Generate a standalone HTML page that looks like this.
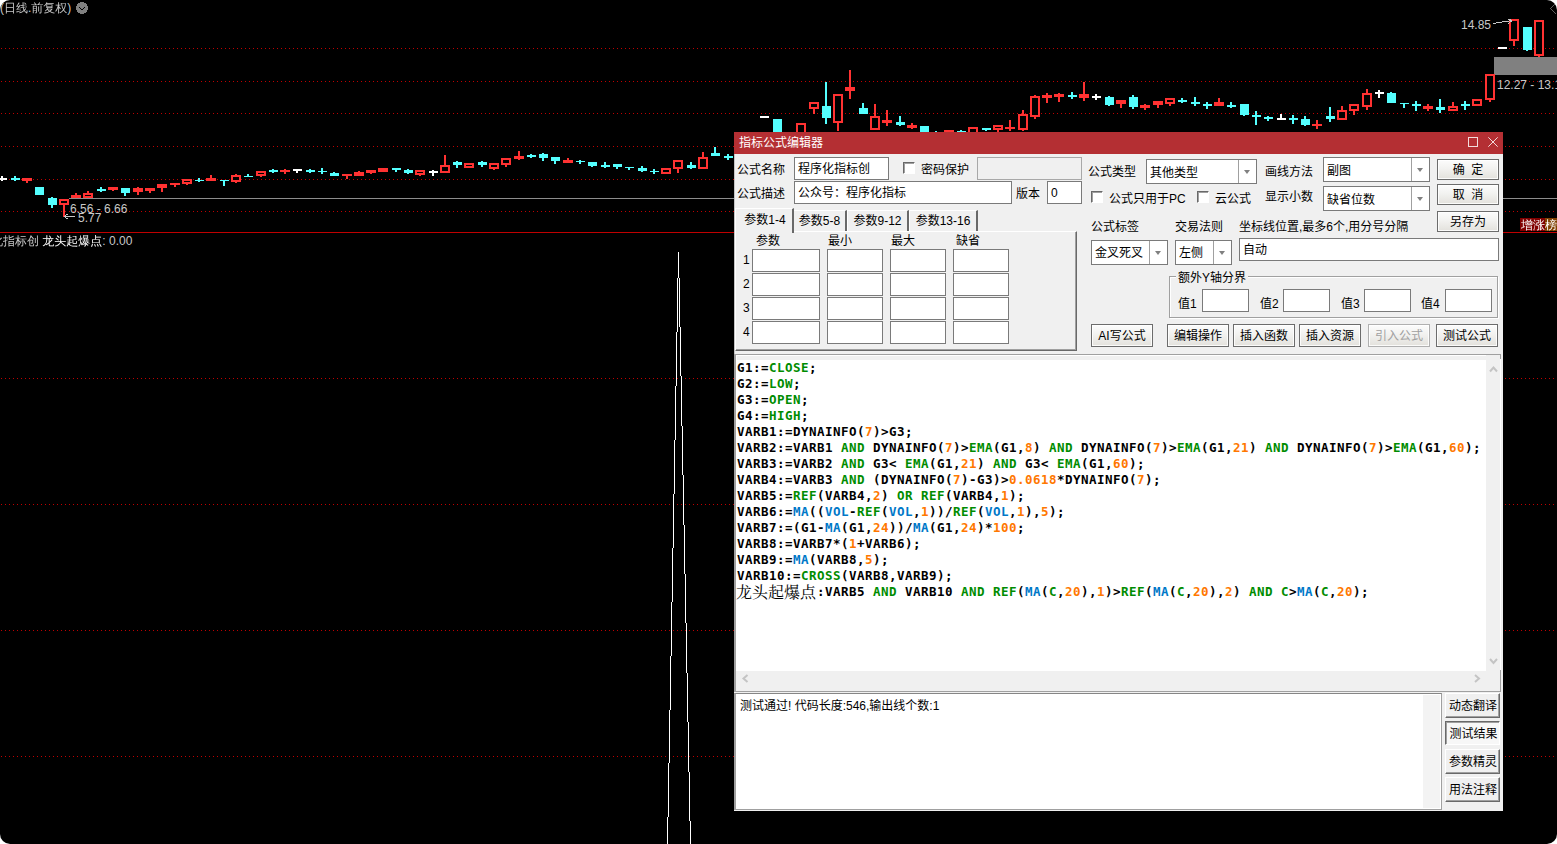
<!DOCTYPE html>
<html lang="zh-CN">
<head>
<meta charset="utf-8">
<title>指标公式编辑器</title>
<style>
html,body{margin:0;padding:0;background:#fff;}
body{width:1557px;height:844px;overflow:hidden;position:relative;}
#root{position:absolute;left:0;top:0;width:1557px;height:844px;background:#000;border-radius:10px;overflow:hidden;}
#chart{position:absolute;left:0;top:0;}
.ct{position:absolute;white-space:nowrap;font:12px/12px "Liberation Sans","Noto Sans CJK SC",sans-serif;color:#c8c8c8;}
.cj{position:absolute;white-space:nowrap;font:12px/12px "Liberation Sans","WenQuanYi Zen Hei","Noto Sans CJK SC",sans-serif;color:#c8c8c8;}
/* dialog */
#dlg{position:absolute;left:734px;top:132px;width:769px;height:679px;background:#f0f0f0;font:12px/14px "Liberation Sans","Noto Sans CJK SC",sans-serif;color:#000;}
#dlg *{box-sizing:border-box;}
#title{position:absolute;left:0;top:0;width:769px;height:22px;background:#b42f33;color:#fff;}
#title span{position:absolute;left:5px;top:4px;font-size:12px;line-height:15px;}
.l{position:absolute;white-space:nowrap;margin-top:1px;}
#tabs .l{margin-top:0;}
.inp{position:absolute;border:1px solid #7a7a7a;background:#fff;padding-left:3px;padding-top:1px;white-space:nowrap;overflow:hidden;}
.btn{position:absolute;border:1px solid #6c6c6c;background:linear-gradient(#fcfcfc,#f2f2f0 45%,#e3e1dc);box-shadow:inset 0 0 0 1px rgba(255,255,255,.85);text-align:center;white-space:nowrap;}
.b3{position:absolute;background:#f0f0f0;border:1px solid #fff;border-right-color:#696969;border-bottom-color:#696969;box-shadow:inset -1px -1px 0 #a0a0a0;text-align:center;white-space:nowrap;}
.b3p{position:absolute;background:#f7f7f7;border:1px solid #696969;border-right-color:#fff;border-bottom-color:#fff;box-shadow:inset 1px 1px 0 #a0a0a0;text-align:center;white-space:nowrap;}
.chk{position:absolute;width:12px;height:12px;border:1px solid #fff;border-top-color:#696969;border-left-color:#696969;background:#fff;box-shadow:inset 1px 1px 0 #a0a0a0;}
.cmb{position:absolute;border:1px solid #7a7a7a;background:#fff;padding-left:3px;white-space:nowrap;}
.cmb i{position:absolute;right:0;top:0;bottom:0;width:18px;border-left:1px solid #a0a0a0;background:#fff;}
.cmb i:after{content:"";position:absolute;left:5px;top:10px;border:3.5px solid transparent;border-top:4px solid #808080;border-bottom:0;}
.pb{position:absolute;border:1px solid #7a7a7a;background:#fff;height:23px;}
#code{position:absolute;left:3px;top:228px;font:bold 12.5px/16px "DejaVu Sans Mono","Noto Serif CJK SC",monospace;color:#000;white-space:pre;letter-spacing:0.474px;}
#code .g{color:#008c00}
#code .o{color:#ff7800}
#code .b{color:#0078c8}
#code .z{font:16px/16px "Liberation Serif","Noto Serif CJK SC",serif;font-weight:400;display:inline-block;width:81px;margin-left:-1px;position:relative;top:0.5px;vertical-align:top;letter-spacing:0;color:#000;}
</style>
</head>
<body>
<div id="root">
<svg id="chart" width="1557" height="844" viewBox="0 0 1557 844" shape-rendering="crispEdges">
<line x1="1" y1="48.5" x2="1557" y2="48.5" stroke="#c00000" stroke-width="1" stroke-dasharray="1 3"/>
<line x1="1" y1="81.5" x2="1557" y2="81.5" stroke="#c00000" stroke-width="1" stroke-dasharray="1 3"/>
<line x1="1" y1="113.5" x2="1557" y2="113.5" stroke="#c00000" stroke-width="1" stroke-dasharray="1 3"/>
<line x1="1" y1="146.5" x2="1557" y2="146.5" stroke="#c00000" stroke-width="1" stroke-dasharray="1 3"/>
<line x1="1" y1="179.5" x2="1557" y2="179.5" stroke="#c00000" stroke-width="1" stroke-dasharray="1 3"/>
<line x1="1" y1="211.5" x2="1557" y2="211.5" stroke="#c00000" stroke-width="1" stroke-dasharray="1 3"/>
<line x1="1" y1="378.5" x2="1557" y2="378.5" stroke="#c00000" stroke-width="1" stroke-dasharray="1 3"/>
<line x1="1" y1="504.5" x2="1557" y2="504.5" stroke="#c00000" stroke-width="1" stroke-dasharray="1 3"/>
<line x1="1" y1="630.5" x2="1557" y2="630.5" stroke="#c00000" stroke-width="1" stroke-dasharray="1 3"/>
<line x1="1" y1="756.5" x2="1557" y2="756.5" stroke="#c00000" stroke-width="1" stroke-dasharray="1 3"/>
<rect x="0" y="232" width="1557" height="1" fill="#c00000"/>
<rect x="69" y="198" width="1488" height="1" fill="#8c8c8c"/>
<rect x="1494" y="57" width="63" height="18" fill="#808080"/>
<rect x="1" y="176" width="2" height="2" fill="#ffffff"/>
<rect x="1" y="180" width="2" height="1" fill="#ffffff"/>
<rect x="-2" y="178" width="9" height="2" fill="#ffffff"/>
<rect x="14" y="176" width="2" height="2" fill="#54ffff"/>
<rect x="14" y="180" width="2" height="1" fill="#54ffff"/>
<rect x="11" y="178" width="9" height="2" fill="#54ffff"/>
<rect x="26" y="181" width="2" height="2" fill="#ff3232"/>
<rect x="22" y="178" width="10" height="3" fill="#ff3232"/>
<rect x="35" y="187" width="9" height="8" fill="#54ffff"/>
<rect x="51" y="197" width="2" height="1" fill="#54ffff"/>
<rect x="51" y="205" width="2" height="3" fill="#54ffff"/>
<rect x="48" y="198" width="9" height="7" fill="#54ffff"/>
<rect x="63" y="205" width="2" height="12" fill="#ff3232"/>
<rect x="60" y="200" width="8" height="4" fill="#000" stroke="#ff3232" stroke-width="2"/>
<rect x="75" y="193" width="2" height="2" fill="#ff3232"/>
<rect x="71" y="195" width="10" height="3" fill="#ff3232"/>
<rect x="87" y="191" width="2" height="2" fill="#ff3232"/>
<rect x="84" y="194" width="8" height="3" fill="#000" stroke="#ff3232" stroke-width="2"/>
<rect x="100" y="187" width="2" height="2" fill="#54ffff"/>
<rect x="100" y="191" width="2" height="1" fill="#54ffff"/>
<rect x="97" y="189" width="9" height="2" fill="#54ffff"/>
<rect x="112" y="190" width="2" height="1" fill="#ff3232"/>
<rect x="108" y="187" width="10" height="3" fill="#ff3232"/>
<rect x="124" y="193" width="2" height="3" fill="#54ffff"/>
<rect x="121" y="188" width="9" height="5" fill="#54ffff"/>
<rect x="137" y="187" width="2" height="1" fill="#ff3232"/>
<rect x="137" y="192" width="2" height="3" fill="#ff3232"/>
<rect x="134" y="189" width="8" height="2" fill="#000" stroke="#ff3232" stroke-width="2"/>
<rect x="149" y="191" width="2" height="2" fill="#ff3232"/>
<rect x="145" y="188" width="10" height="3" fill="#ff3232"/>
<rect x="161" y="188" width="2" height="4" fill="#ff3232"/>
<rect x="157" y="184" width="10" height="4" fill="#ff3232"/>
<rect x="174" y="185" width="2" height="2" fill="#ff3232"/>
<rect x="170" y="183" width="10" height="2" fill="#ff3232"/>
<rect x="186" y="184" width="2" height="1" fill="#ff3232"/>
<rect x="183" y="180" width="8" height="3" fill="#000" stroke="#ff3232" stroke-width="2"/>
<rect x="198" y="178" width="2" height="2" fill="#54ffff"/>
<rect x="198" y="181" width="2" height="1" fill="#54ffff"/>
<rect x="195" y="180" width="9" height="1" fill="#54ffff"/>
<rect x="210" y="175" width="2" height="3" fill="#ff3232"/>
<rect x="206" y="178" width="10" height="3" fill="#ff3232"/>
<rect x="223" y="181" width="2" height="5" fill="#54ffff"/>
<rect x="220" y="180" width="9" height="1" fill="#54ffff"/>
<rect x="235" y="174" width="2" height="1" fill="#ff3232"/>
<rect x="235" y="182" width="2" height="1" fill="#ff3232"/>
<rect x="232" y="176" width="8" height="5" fill="#000" stroke="#ff3232" stroke-width="2"/>
<rect x="247" y="174" width="2" height="2" fill="#54ffff"/>
<rect x="244" y="176" width="9" height="1" fill="#54ffff"/>
<rect x="260" y="176" width="2" height="1" fill="#ff3232"/>
<rect x="257" y="172" width="8" height="3" fill="#000" stroke="#ff3232" stroke-width="2"/>
<rect x="272" y="169" width="2" height="1" fill="#54ffff"/>
<rect x="272" y="172" width="2" height="1" fill="#54ffff"/>
<rect x="269" y="170" width="9" height="2" fill="#54ffff"/>
<rect x="284" y="169" width="2" height="1" fill="#ff3232"/>
<rect x="284" y="172" width="2" height="2" fill="#ff3232"/>
<rect x="280" y="170" width="10" height="2" fill="#ff3232"/>
<rect x="296" y="171" width="2" height="2" fill="#ffffff"/>
<rect x="293" y="169" width="9" height="2" fill="#ffffff"/>
<rect x="309" y="169" width="2" height="1" fill="#54ffff"/>
<rect x="309" y="172" width="2" height="1" fill="#54ffff"/>
<rect x="306" y="170" width="9" height="2" fill="#54ffff"/>
<rect x="321" y="168" width="2" height="3" fill="#54ffff"/>
<rect x="321" y="172" width="2" height="2" fill="#54ffff"/>
<rect x="318" y="171" width="9" height="1" fill="#54ffff"/>
<rect x="333" y="172" width="2" height="1" fill="#54ffff"/>
<rect x="330" y="173" width="9" height="3" fill="#54ffff"/>
<rect x="346" y="176" width="2" height="3" fill="#ff3232"/>
<rect x="342" y="174" width="10" height="2" fill="#ff3232"/>
<rect x="358" y="171" width="2" height="1" fill="#ff3232"/>
<rect x="354" y="172" width="10" height="4" fill="#ff3232"/>
<rect x="370" y="173" width="2" height="1" fill="#ff3232"/>
<rect x="366" y="170" width="10" height="3" fill="#ff3232"/>
<rect x="378" y="168" width="10" height="4" fill="#ff3232"/>
<rect x="395" y="170" width="2" height="2" fill="#54ffff"/>
<rect x="392" y="168" width="9" height="2" fill="#54ffff"/>
<rect x="407" y="169" width="2" height="1" fill="#54ffff"/>
<rect x="407" y="173" width="2" height="1" fill="#54ffff"/>
<rect x="404" y="170" width="9" height="3" fill="#54ffff"/>
<rect x="419" y="175" width="2" height="1" fill="#ff3232"/>
<rect x="416" y="171" width="8" height="3" fill="#000" stroke="#ff3232" stroke-width="2"/>
<rect x="432" y="170" width="2" height="1" fill="#ffffff"/>
<rect x="432" y="173" width="2" height="3" fill="#ffffff"/>
<rect x="429" y="171" width="9" height="2" fill="#ffffff"/>
<rect x="444" y="155" width="2" height="10" fill="#ff3232"/>
<rect x="441" y="166" width="8" height="6" fill="#000" stroke="#ff3232" stroke-width="2"/>
<rect x="456" y="161" width="2" height="1" fill="#54ffff"/>
<rect x="456" y="165" width="2" height="3" fill="#54ffff"/>
<rect x="453" y="162" width="9" height="3" fill="#54ffff"/>
<rect x="465" y="164" width="8" height="3" fill="#000" stroke="#ff3232" stroke-width="2"/>
<rect x="481" y="161" width="2" height="1" fill="#54ffff"/>
<rect x="481" y="165" width="2" height="2" fill="#54ffff"/>
<rect x="478" y="162" width="9" height="3" fill="#54ffff"/>
<rect x="493" y="169" width="2" height="1" fill="#ff3232"/>
<rect x="490" y="164" width="8" height="4" fill="#000" stroke="#ff3232" stroke-width="2"/>
<rect x="505" y="165" width="2" height="2" fill="#ff3232"/>
<rect x="502" y="159" width="8" height="5" fill="#000" stroke="#ff3232" stroke-width="2"/>
<rect x="518" y="151" width="2" height="5" fill="#ff3232"/>
<rect x="518" y="159" width="2" height="1" fill="#ff3232"/>
<rect x="514" y="156" width="10" height="3" fill="#ff3232"/>
<rect x="530" y="154" width="2" height="1" fill="#54ffff"/>
<rect x="530" y="157" width="2" height="1" fill="#54ffff"/>
<rect x="527" y="155" width="9" height="2" fill="#54ffff"/>
<rect x="542" y="153" width="2" height="1" fill="#54ffff"/>
<rect x="542" y="158" width="2" height="3" fill="#54ffff"/>
<rect x="539" y="154" width="9" height="4" fill="#54ffff"/>
<rect x="554" y="161" width="2" height="3" fill="#54ffff"/>
<rect x="551" y="157" width="9" height="4" fill="#54ffff"/>
<rect x="567" y="158" width="2" height="2" fill="#ff3232"/>
<rect x="563" y="160" width="10" height="3" fill="#ff3232"/>
<rect x="579" y="160" width="2" height="1" fill="#54ffff"/>
<rect x="579" y="162" width="2" height="2" fill="#54ffff"/>
<rect x="576" y="161" width="9" height="1" fill="#54ffff"/>
<rect x="591" y="166" width="2" height="1" fill="#54ffff"/>
<rect x="588" y="162" width="9" height="4" fill="#54ffff"/>
<rect x="604" y="162" width="2" height="3" fill="#54ffff"/>
<rect x="604" y="167" width="2" height="1" fill="#54ffff"/>
<rect x="601" y="165" width="9" height="2" fill="#54ffff"/>
<rect x="616" y="167" width="2" height="2" fill="#54ffff"/>
<rect x="613" y="164" width="9" height="3" fill="#54ffff"/>
<rect x="628" y="168" width="2" height="2" fill="#54ffff"/>
<rect x="625" y="167" width="9" height="1" fill="#54ffff"/>
<rect x="641" y="166" width="2" height="2" fill="#54ffff"/>
<rect x="641" y="171" width="2" height="1" fill="#54ffff"/>
<rect x="638" y="168" width="9" height="3" fill="#54ffff"/>
<rect x="653" y="169" width="2" height="2" fill="#54ffff"/>
<rect x="653" y="172" width="2" height="2" fill="#54ffff"/>
<rect x="650" y="171" width="9" height="1" fill="#54ffff"/>
<rect x="662" y="169" width="8" height="4" fill="#000" stroke="#ff3232" stroke-width="2"/>
<rect x="677" y="169" width="2" height="4" fill="#ff3232"/>
<rect x="674" y="161" width="8" height="7" fill="#000" stroke="#ff3232" stroke-width="2"/>
<rect x="690" y="162" width="2" height="3" fill="#54ffff"/>
<rect x="690" y="168" width="2" height="1" fill="#54ffff"/>
<rect x="687" y="165" width="9" height="3" fill="#54ffff"/>
<rect x="702" y="152" width="2" height="5" fill="#ff3232"/>
<rect x="699" y="158" width="8" height="10" fill="#000" stroke="#ff3232" stroke-width="2"/>
<rect x="714" y="147" width="2" height="6" fill="#54ffff"/>
<rect x="711" y="153" width="9" height="3" fill="#54ffff"/>
<rect x="727" y="154" width="2" height="2" fill="#54ffff"/>
<rect x="727" y="158" width="2" height="2" fill="#54ffff"/>
<rect x="724" y="156" width="9" height="2" fill="#54ffff"/>
<rect x="760" y="116" width="9" height="2" fill="#ffffff"/>
<rect x="773" y="119" width="9" height="21" fill="#54ffff"/>
<rect x="797" y="124" width="8" height="15" fill="#000" stroke="#ff3232" stroke-width="2"/>
<rect x="813" y="109" width="2" height="5" fill="#ff3232"/>
<rect x="810" y="103" width="8" height="5" fill="#000" stroke="#ff3232" stroke-width="2"/>
<rect x="825" y="82" width="2" height="24" fill="#54ffff"/>
<rect x="825" y="118" width="2" height="6" fill="#54ffff"/>
<rect x="822" y="106" width="9" height="12" fill="#54ffff"/>
<rect x="837" y="123" width="2" height="8" fill="#ff3232"/>
<rect x="834" y="95" width="8" height="27" fill="#000" stroke="#ff3232" stroke-width="2"/>
<rect x="849" y="70" width="2" height="17" fill="#ff3232"/>
<rect x="849" y="91" width="2" height="8" fill="#ff3232"/>
<rect x="845" y="87" width="10" height="4" fill="#ff3232"/>
<rect x="862" y="103" width="2" height="5" fill="#54ffff"/>
<rect x="859" y="108" width="9" height="6" fill="#54ffff"/>
<rect x="874" y="104" width="2" height="12" fill="#ff3232"/>
<rect x="871" y="117" width="8" height="12" fill="#000" stroke="#ff3232" stroke-width="2"/>
<rect x="886" y="110" width="2" height="10" fill="#ff3232"/>
<rect x="886" y="123" width="2" height="3" fill="#ff3232"/>
<rect x="882" y="120" width="10" height="3" fill="#ff3232"/>
<rect x="899" y="116" width="2" height="6" fill="#54ffff"/>
<rect x="899" y="125" width="2" height="1" fill="#54ffff"/>
<rect x="896" y="122" width="9" height="3" fill="#54ffff"/>
<rect x="911" y="123" width="2" height="2" fill="#ff3232"/>
<rect x="911" y="128" width="2" height="1" fill="#ff3232"/>
<rect x="907" y="125" width="10" height="3" fill="#ff3232"/>
<rect x="920" y="126" width="9" height="14" fill="#54ffff"/>
<rect x="935" y="131" width="2" height="2" fill="#54ffff"/>
<rect x="935" y="134" width="2" height="6" fill="#54ffff"/>
<rect x="932" y="133" width="9" height="1" fill="#54ffff"/>
<rect x="944" y="130" width="10" height="10" fill="#ff3232"/>
<rect x="960" y="130" width="2" height="1" fill="#54ffff"/>
<rect x="957" y="131" width="9" height="5" fill="#54ffff"/>
<rect x="969" y="128" width="8" height="11" fill="#000" stroke="#ff3232" stroke-width="2"/>
<rect x="985" y="130" width="2" height="1" fill="#54ffff"/>
<rect x="982" y="128" width="9" height="2" fill="#54ffff"/>
<rect x="997" y="130" width="2" height="2" fill="#ff3232"/>
<rect x="994" y="126" width="8" height="3" fill="#000" stroke="#ff3232" stroke-width="2"/>
<rect x="1009" y="120" width="2" height="7" fill="#ff3232"/>
<rect x="1009" y="129" width="2" height="2" fill="#ff3232"/>
<rect x="1005" y="127" width="10" height="2" fill="#ff3232"/>
<rect x="1022" y="110" width="2" height="4" fill="#ff3232"/>
<rect x="1022" y="130" width="2" height="1" fill="#ff3232"/>
<rect x="1019" y="115" width="8" height="14" fill="#000" stroke="#ff3232" stroke-width="2"/>
<rect x="1034" y="95" width="2" height="1" fill="#ff3232"/>
<rect x="1034" y="117" width="2" height="2" fill="#ff3232"/>
<rect x="1031" y="97" width="8" height="19" fill="#000" stroke="#ff3232" stroke-width="2"/>
<rect x="1046" y="93" width="2" height="2" fill="#ff3232"/>
<rect x="1046" y="98" width="2" height="5" fill="#ff3232"/>
<rect x="1042" y="95" width="10" height="3" fill="#ff3232"/>
<rect x="1058" y="93" width="2" height="1" fill="#ff3232"/>
<rect x="1058" y="97" width="2" height="5" fill="#ff3232"/>
<rect x="1054" y="94" width="10" height="3" fill="#ff3232"/>
<rect x="1071" y="92" width="2" height="3" fill="#54ffff"/>
<rect x="1071" y="97" width="2" height="2" fill="#54ffff"/>
<rect x="1068" y="95" width="9" height="2" fill="#54ffff"/>
<rect x="1083" y="82" width="2" height="12" fill="#ff3232"/>
<rect x="1083" y="98" width="2" height="3" fill="#ff3232"/>
<rect x="1079" y="94" width="10" height="4" fill="#ff3232"/>
<rect x="1095" y="94" width="2" height="2" fill="#ffffff"/>
<rect x="1095" y="98" width="2" height="2" fill="#ffffff"/>
<rect x="1092" y="96" width="9" height="2" fill="#ffffff"/>
<rect x="1108" y="96" width="2" height="1" fill="#54ffff"/>
<rect x="1108" y="105" width="2" height="1" fill="#54ffff"/>
<rect x="1105" y="97" width="9" height="8" fill="#54ffff"/>
<rect x="1120" y="104" width="2" height="4" fill="#ff3232"/>
<rect x="1116" y="100" width="10" height="4" fill="#ff3232"/>
<rect x="1132" y="95" width="2" height="2" fill="#54ffff"/>
<rect x="1132" y="107" width="2" height="2" fill="#54ffff"/>
<rect x="1129" y="97" width="9" height="10" fill="#54ffff"/>
<rect x="1144" y="104" width="2" height="1" fill="#ff3232"/>
<rect x="1144" y="108" width="2" height="2" fill="#ff3232"/>
<rect x="1140" y="105" width="10" height="3" fill="#ff3232"/>
<rect x="1157" y="105" width="2" height="3" fill="#ff3232"/>
<rect x="1153" y="101" width="10" height="4" fill="#ff3232"/>
<rect x="1169" y="104" width="2" height="2" fill="#ff3232"/>
<rect x="1166" y="99" width="8" height="4" fill="#000" stroke="#ff3232" stroke-width="2"/>
<rect x="1181" y="98" width="2" height="2" fill="#54ffff"/>
<rect x="1181" y="102" width="2" height="1" fill="#54ffff"/>
<rect x="1178" y="100" width="9" height="2" fill="#54ffff"/>
<rect x="1194" y="97" width="2" height="5" fill="#54ffff"/>
<rect x="1194" y="104" width="2" height="2" fill="#54ffff"/>
<rect x="1191" y="102" width="9" height="2" fill="#54ffff"/>
<rect x="1206" y="102" width="2" height="2" fill="#54ffff"/>
<rect x="1206" y="106" width="2" height="3" fill="#54ffff"/>
<rect x="1203" y="104" width="9" height="2" fill="#54ffff"/>
<rect x="1218" y="98" width="2" height="4" fill="#ff3232"/>
<rect x="1214" y="102" width="10" height="4" fill="#ff3232"/>
<rect x="1230" y="102" width="2" height="3" fill="#54ffff"/>
<rect x="1230" y="107" width="2" height="1" fill="#54ffff"/>
<rect x="1227" y="105" width="9" height="2" fill="#54ffff"/>
<rect x="1243" y="115" width="2" height="1" fill="#54ffff"/>
<rect x="1240" y="104" width="9" height="11" fill="#54ffff"/>
<rect x="1255" y="111" width="2" height="4" fill="#54ffff"/>
<rect x="1255" y="117" width="2" height="8" fill="#54ffff"/>
<rect x="1252" y="115" width="9" height="2" fill="#54ffff"/>
<rect x="1267" y="116" width="2" height="1" fill="#54ffff"/>
<rect x="1267" y="119" width="2" height="2" fill="#54ffff"/>
<rect x="1264" y="117" width="9" height="2" fill="#54ffff"/>
<rect x="1280" y="114" width="2" height="4" fill="#ffffff"/>
<rect x="1277" y="118" width="9" height="2" fill="#ffffff"/>
<rect x="1292" y="115" width="2" height="3" fill="#54ffff"/>
<rect x="1292" y="120" width="2" height="4" fill="#54ffff"/>
<rect x="1289" y="118" width="9" height="2" fill="#54ffff"/>
<rect x="1304" y="116" width="2" height="3" fill="#54ffff"/>
<rect x="1304" y="125" width="2" height="1" fill="#54ffff"/>
<rect x="1301" y="119" width="9" height="6" fill="#54ffff"/>
<rect x="1316" y="120" width="2" height="4" fill="#ff3232"/>
<rect x="1316" y="126" width="2" height="3" fill="#ff3232"/>
<rect x="1312" y="124" width="10" height="2" fill="#ff3232"/>
<rect x="1329" y="107" width="2" height="9" fill="#54ffff"/>
<rect x="1329" y="119" width="2" height="3" fill="#54ffff"/>
<rect x="1326" y="116" width="9" height="3" fill="#54ffff"/>
<rect x="1341" y="106" width="2" height="4" fill="#ff3232"/>
<rect x="1338" y="111" width="8" height="8" fill="#000" stroke="#ff3232" stroke-width="2"/>
<rect x="1353" y="111" width="2" height="4" fill="#ff3232"/>
<rect x="1350" y="105" width="8" height="5" fill="#000" stroke="#ff3232" stroke-width="2"/>
<rect x="1366" y="89" width="2" height="4" fill="#ff3232"/>
<rect x="1366" y="107" width="2" height="3" fill="#ff3232"/>
<rect x="1363" y="94" width="8" height="12" fill="#000" stroke="#ff3232" stroke-width="2"/>
<rect x="1378" y="90" width="2" height="2" fill="#ffffff"/>
<rect x="1378" y="94" width="2" height="4" fill="#ffffff"/>
<rect x="1375" y="92" width="9" height="2" fill="#ffffff"/>
<rect x="1390" y="92" width="2" height="1" fill="#54ffff"/>
<rect x="1387" y="93" width="9" height="10" fill="#54ffff"/>
<rect x="1403" y="104" width="2" height="4" fill="#54ffff"/>
<rect x="1400" y="103" width="9" height="1" fill="#54ffff"/>
<rect x="1415" y="101" width="2" height="3" fill="#54ffff"/>
<rect x="1415" y="106" width="2" height="5" fill="#54ffff"/>
<rect x="1412" y="104" width="9" height="2" fill="#54ffff"/>
<rect x="1427" y="104" width="2" height="2" fill="#ff3232"/>
<rect x="1427" y="109" width="2" height="2" fill="#ff3232"/>
<rect x="1423" y="106" width="10" height="3" fill="#ff3232"/>
<rect x="1439" y="99" width="2" height="8" fill="#54ffff"/>
<rect x="1439" y="110" width="2" height="3" fill="#54ffff"/>
<rect x="1436" y="107" width="9" height="3" fill="#54ffff"/>
<rect x="1452" y="102" width="2" height="4" fill="#ff3232"/>
<rect x="1449" y="107" width="8" height="3" fill="#000" stroke="#ff3232" stroke-width="2"/>
<rect x="1464" y="101" width="2" height="3" fill="#54ffff"/>
<rect x="1464" y="106" width="2" height="4" fill="#54ffff"/>
<rect x="1461" y="104" width="9" height="2" fill="#54ffff"/>
<rect x="1473" y="100" width="8" height="5" fill="#000" stroke="#ff3232" stroke-width="2"/>
<rect x="1489" y="100" width="2" height="2" fill="#ff3232"/>
<rect x="1486" y="75" width="8" height="24" fill="#000" stroke="#ff3232" stroke-width="2"/>
<rect x="1498" y="47" width="9" height="2" fill="#ffffff"/>
<rect x="1513" y="41" width="2" height="5" fill="#ff3232"/>
<rect x="1510" y="20" width="8" height="20" fill="#000" stroke="#ff3232" stroke-width="2"/>
<rect x="1526" y="50" width="2" height="1" fill="#54ffff"/>
<rect x="1523" y="27" width="9" height="23" fill="#54ffff"/>
<rect x="1538" y="56" width="2" height="1" fill="#ff3232"/>
<rect x="1535" y="21" width="8" height="34" fill="#000" stroke="#ff3232" stroke-width="2"/>
<polyline points="667.5,845 678.5,252 690.5,845" fill="none" stroke="#ffffff" stroke-width="1"/>
<path d="M64.5 216.5 H75 M64.5 216.5 l3 -2.5 M64.5 216.5 l3 2.5" stroke="#c8c8c8" stroke-width="1" fill="none"/>
<path d="M1493 23.5 L1512 20.5 M1512 20.5 l-4 -1.5 M1512 20.5 l-3.5 3" stroke="#c8c8c8" stroke-width="1" fill="none"/>
<circle cx="82" cy="8" r="6" fill="#808080"/><path d="M78.6 6.5 L82 9.7 L85.4 6.5" stroke="#000" stroke-width="1" fill="none"/>
<path d="M1550.5 8.5 L1556.5 2.5 M1550.5 8.5 L1556.5 14.5" stroke="#606060" stroke-width="1" fill="none"/>
</svg>
<div class="cj" style="left:0px;top:2px;">(日线.前复权)</div>
<div class="ct" style="left:70px;top:203px;">6.56 - 6.66</div>
<div class="ct" style="left:78px;top:212px;">5.77</div>
<div class="ct" style="left:1461px;top:19px;">14.85</div>
<div class="ct" style="left:1497px;top:79px;">12.27 - 13.10</div>
<div class="cj" style="left:-33px;top:235px;">程序化指标创 <span style="color:#fff">龙头起爆点</span>: 0.00</div>
<div class="cj" style="left:1520px;top:218px;height:13px;line-height:14px;color:#fff;background:#800000;width:37px;overflow:hidden;"><span style="display:inline-block;height:13px;padding-left:1px;">增涨</span><span style="display:inline-block;height:13px;width:14px;background:#804000;">榜</span></div>

<div id="dlg">
 <div id="title"><span>指标公式编辑器</span>
  <svg style="position:absolute;left:734px;top:5px" width="30" height="11" viewBox="0 0 30 11"><rect x="0.5" y="0.5" width="9" height="9" fill="none" stroke="#f3dcdc" stroke-width="1"/><path d="M20.3 0.3 L29.7 9.7 M29.7 0.3 L20.3 9.7" stroke="#f3dcdc" stroke-width="1" fill="none"/></svg>
 </div>

 <!-- row 1 -->
 <div class="l" style="left:3px;top:30px;">公式名称</div>
 <div class="inp" style="left:60px;top:25px;width:95px;height:23px;line-height:21px;">程序化指标创</div>
 <div class="chk" style="left:169px;top:30px;"></div>
 <div class="l" style="left:187px;top:30px;">密码保护</div>
 <div class="inp" style="left:243px;top:25px;width:105px;height:23px;background:#f0f0f0;border-color:#a8a8a8;"></div>
 <div class="l" style="left:354px;top:32px;">公式类型</div>
 <div class="cmb" style="left:412px;top:27px;width:111px;height:25px;line-height:26px;">其他类型<i></i></div>
 <div class="l" style="left:531px;top:32px;">画线方法</div>
 <div class="cmb" style="left:589px;top:25px;width:107px;height:25px;line-height:26px;">副图<i></i></div>
 <div class="btn" style="left:703px;top:27px;width:62px;height:21px;line-height:21px;">确&nbsp;&nbsp;定</div>

 <!-- row 2 -->
 <div class="l" style="left:3px;top:54px;">公式描述</div>
 <div class="inp" style="left:60px;top:49px;width:218px;height:23px;line-height:21px;">公众号：程序化指标</div>
 <div class="l" style="left:282px;top:54px;">版本</div>
 <div class="inp" style="left:313px;top:49px;width:35px;height:23px;line-height:21px;">0</div>
 <div class="chk" style="left:357px;top:59px;"></div>
 <div class="l" style="left:375px;top:59px;">公式只用于PC</div>
 <div class="chk" style="left:463px;top:59px;"></div>
 <div class="l" style="left:481px;top:59px;">云公式</div>
 <div class="l" style="left:531px;top:57px;">显示小数</div>
 <div class="cmb" style="left:589px;top:54px;width:107px;height:25px;line-height:26px;">缺省位数<i></i></div>
 <div class="btn" style="left:703px;top:52px;width:62px;height:21px;line-height:21px;">取&nbsp;&nbsp;消</div>
 <div class="btn" style="left:703px;top:79px;width:62px;height:21px;line-height:21px;">另存为</div>

 <!-- tabs -->
 <div id="tabs">
  <div class="l" style="left:1px;top:76px;width:59px;height:25px;border:1px solid #fff;border-right:2px solid #696969;border-bottom:0;text-align:center;line-height:22px;padding-left:2px;background:#f0f0f0;z-index:2;">参数1-4</div>
  <div class="l" style="left:60px;top:78px;width:53px;height:21px;border-top:1px solid #fff;border-right:2px solid #696969;text-align:center;line-height:21px;">参数5-8</div>
  <div class="l" style="left:113px;top:78px;width:62px;height:21px;border-top:1px solid #fff;border-left:1px solid #fff;border-right:2px solid #696969;text-align:center;line-height:21px;">参数9-12</div>
  <div class="l" style="left:175px;top:78px;width:69px;height:21px;border-top:1px solid #fff;border-left:1px solid #fff;border-right:2px solid #696969;text-align:center;line-height:21px;">参数13-16</div>
 </div>
 <div style="position:absolute;left:1px;top:99px;width:342px;height:120px;border:1px solid #fff;border-right:1px solid #696969;border-bottom:1px solid #696969;box-shadow:inset -1px -1px 0 #a0a0a0;"></div>
 <div style="position:absolute;left:0;top:22px;width:1px;height:200px;background:#c4c4c4;"></div>
 <div class="l" style="left:22px;top:101px;">参数</div>
 <div class="l" style="left:94px;top:101px;">最小</div>
 <div class="l" style="left:157px;top:101px;">最大</div>
 <div class="l" style="left:222px;top:101px;">缺省</div>
 <div class="l" style="left:9px;top:120px;">1</div>
 <div class="l" style="left:9px;top:144px;">2</div>
 <div class="l" style="left:9px;top:168px;">3</div>
 <div class="l" style="left:9px;top:192px;">4</div>
 <div class="pb" style="left:18px;top:117px;width:68px;"></div><div class="pb" style="left:93px;top:117px;width:56px;"></div><div class="pb" style="left:156px;top:117px;width:56px;"></div><div class="pb" style="left:219px;top:117px;width:56px;"></div>
 <div class="pb" style="left:18px;top:141px;width:68px;"></div><div class="pb" style="left:93px;top:141px;width:56px;"></div><div class="pb" style="left:156px;top:141px;width:56px;"></div><div class="pb" style="left:219px;top:141px;width:56px;"></div>
 <div class="pb" style="left:18px;top:165px;width:68px;"></div><div class="pb" style="left:93px;top:165px;width:56px;"></div><div class="pb" style="left:156px;top:165px;width:56px;"></div><div class="pb" style="left:219px;top:165px;width:56px;"></div>
 <div class="pb" style="left:18px;top:189px;width:68px;"></div><div class="pb" style="left:93px;top:189px;width:56px;"></div><div class="pb" style="left:156px;top:189px;width:56px;"></div><div class="pb" style="left:219px;top:189px;width:56px;"></div>

 <!-- right middle -->
 <div class="l" style="left:357px;top:87px;">公式标签</div>
 <div class="l" style="left:441px;top:87px;">交易法则</div>
 <div class="l" style="left:505px;top:87px;">坐标线位置,最多6个,用分号分隔</div>
 <div class="cmb" style="left:357px;top:108px;width:77px;height:25px;line-height:25px;">金叉死叉<i></i></div>
 <div class="cmb" style="left:441px;top:108px;width:57px;height:25px;line-height:25px;">左侧<i></i></div>
 <div class="inp" style="left:505px;top:106px;width:260px;height:23px;line-height:20px;">自动</div>
 <div style="position:absolute;left:435px;top:144px;width:329px;height:42px;border:1px solid #a0a0a0;box-shadow:inset 1px 1px 0 #fff, 1px 1px 0 #fff;"></div>
 <div class="l" style="left:442px;top:138px;background:#f0f0f0;padding:0 2px;">额外Y轴分界</div>
 <div class="l" style="left:444px;top:164px;">值1</div><div class="pb" style="left:468px;top:157px;width:47px;"></div>
 <div class="l" style="left:526px;top:164px;">值2</div><div class="pb" style="left:549px;top:157px;width:47px;"></div>
 <div class="l" style="left:607px;top:164px;">值3</div><div class="pb" style="left:630px;top:157px;width:47px;"></div>
 <div class="l" style="left:687px;top:164px;">值4</div><div class="pb" style="left:711px;top:157px;width:47px;"></div>
 <div class="btn" style="left:357px;top:192px;width:62px;height:23px;line-height:22.5px;">AI写公式</div>
 <div class="btn" style="left:433px;top:192px;width:62px;height:23px;line-height:22.5px;">编辑操作</div>
 <div class="btn" style="left:499px;top:192px;width:62px;height:23px;line-height:22.5px;">插入函数</div>
 <div class="btn" style="left:565px;top:192px;width:62px;height:23px;line-height:22.5px;">插入资源</div>
 <div class="btn" style="left:634px;top:192px;width:62px;height:23px;line-height:22.5px;color:#a0a0a0;border-color:#b0b0b0;">引入公式</div>
 <div class="btn" style="left:702px;top:192px;width:62px;height:23px;line-height:22.5px;">测试公式</div>

 <!-- editor -->
 <div style="position:absolute;left:0;top:222px;width:767px;height:338px;background:#fff;border-left:2px solid #a0a0a0;border-top:1px solid #a0a0a0;border-bottom:1px solid #a0a0a0;"></div>
 <div style="position:absolute;left:766px;top:538px;width:1px;height:22px;background:#a0a0a0;"></div>
 <div style="position:absolute;left:766px;top:222px;width:1px;height:5px;background:#a0a0a0;"></div>
 <div style="position:absolute;left:3px;top:224px;width:749px;height:4px;background:#f0f0f0;"></div>
 <div style="position:absolute;left:752px;top:223px;width:14px;height:316px;background:#f0f0f0;"></div>
 <div style="position:absolute;left:2px;top:539px;width:764px;height:20px;background:#f0f0f0;"></div>
 <svg style="position:absolute;left:0;top:222px;" width="769" height="340" viewBox="0 0 769 340">
  <path d="M756 17.5 L759.5 13.5 L763 17.5" fill="none" stroke="#c4c4c4" stroke-width="2"/>
  <path d="M756 305 L759.5 309 L763 305" fill="none" stroke="#c4c4c4" stroke-width="2"/>
  <path d="M13.5 321 L9.5 324.5 L13.5 328" fill="none" stroke="#c4c4c4" stroke-width="2"/>
  <path d="M741 321 L745 324.5 L741 328" fill="none" stroke="#c4c4c4" stroke-width="2"/>
 </svg>
<div id="code">G1:=<span class="g">CLOSE</span>;
G2:=<span class="g">LOW</span>;
G3:=<span class="g">OPEN</span>;
G4:=<span class="g">HIGH</span>;
VARB1:=DYNAINFO(<span class="o">7</span>)&gt;G3;
VARB2:=VARB1 <span class="g">AND</span> DYNAINFO(<span class="o">7</span>)&gt;<span class="g">EMA</span>(G1,<span class="o">8</span>) <span class="g">AND</span> DYNAINFO(<span class="o">7</span>)&gt;<span class="g">EMA</span>(G1,<span class="o">21</span>) <span class="g">AND</span> DYNAINFO(<span class="o">7</span>)&gt;<span class="g">EMA</span>(G1,<span class="o">60</span>);
VARB3:=VARB2 <span class="g">AND</span> G3&lt; <span class="g">EMA</span>(G1,<span class="o">21</span>) <span class="g">AND</span> G3&lt; <span class="g">EMA</span>(G1,<span class="o">60</span>);
VARB4:=VARB3 <span class="g">AND</span> (DYNAINFO(<span class="o">7</span>)-G3)&gt;<span class="o">0.0618</span>*DYNAINFO(<span class="o">7</span>);
VARB5:=<span class="g">REF</span>(VARB4,<span class="o">2</span>) <span class="g">OR</span> <span class="g">REF</span>(VARB4,<span class="o">1</span>);
VARB6:=<span class="b">MA</span>((<span class="b">VOL</span>-<span class="g">REF</span>(<span class="b">VOL</span>,<span class="o">1</span>))/<span class="g">REF</span>(<span class="b">VOL</span>,<span class="o">1</span>),<span class="o">5</span>);
VARB7:=(G1-<span class="b">MA</span>(G1,<span class="o">24</span>))/<span class="b">MA</span>(G1,<span class="o">24</span>)*<span class="o">100</span>;
VARB8:=VARB7*(<span class="o">1</span>+VARB6);
VARB9:=<span class="b">MA</span>(VARB8,<span class="o">5</span>);
VARB10:=<span class="g">CROSS</span>(VARB8,VARB9);
<span class="z">龙头起爆点</span>:VARB5 <span class="g">AND</span> VARB10 <span class="g">AND</span> <span class="g">REF</span>(<span class="b">MA</span>(<span class="g">C</span>,<span class="o">20</span>),<span class="o">1</span>)&gt;<span class="g">REF</span>(<span class="b">MA</span>(<span class="g">C</span>,<span class="o">20</span>),<span class="o">2</span>) <span class="g">AND</span> <span class="g">C</span>&gt;<span class="b">MA</span>(<span class="g">C</span>,<span class="o">20</span>);</div>

 <!-- output -->
 <div style="position:absolute;left:0;top:561px;width:708px;height:117px;background:#fff;border-left:2px solid #a0a0a0;border-top:1px solid #868686;border-right:1px solid #a0a0a0;border-bottom:1px solid #a0a0a0;"></div>
 <div style="position:absolute;left:689px;top:563px;width:17px;height:113px;background:#f3f3f3;"></div>
 <div class="l" style="left:6px;top:566px;">测试通过! 代码长度:546,输出线个数:1</div>
 <div class="b3" style="left:711px;top:561px;width:55px;height:25px;line-height:24px;padding-left:1px;">动态翻译</div>
 <div class="b3p" style="left:711px;top:589px;width:55px;height:24px;line-height:24px;padding-left:2px;">测试结果</div>
 <div class="b3" style="left:711px;top:617px;width:55px;height:25px;line-height:24px;padding-left:1px;">参数精灵</div>
 <div class="b3" style="left:711px;top:645px;width:55px;height:25px;line-height:24px;padding-left:1px;">用法注释</div>
</div>
</div>
</body>
</html>
